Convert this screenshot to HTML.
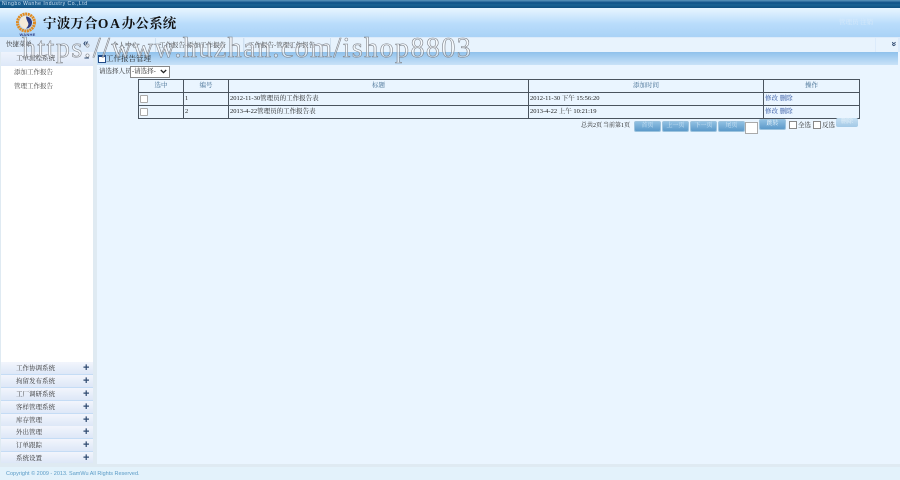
<!DOCTYPE html>
<html>
<head>
<meta charset="utf-8">
<style>
html,body{margin:0;padding:0}
body{width:900px;height:480px;position:relative;overflow:hidden;background:#dfeaf2;font-family:"Liberation Serif","Noto Serif CJK SC",serif;color:#222}
#w{position:absolute;left:0;top:0;width:900px;height:480px;overflow:hidden;filter:blur(.3px)}
.a{position:absolute;white-space:nowrap}
.s{font-size:6.5px;line-height:8px}
.top{left:0;top:0;width:900px;height:8px;background:linear-gradient(#5f97bd,#0d4f86 35%,#1b6293 60%,#0f4f80)}
.hd{left:0;top:8px;width:900px;height:29px;background:linear-gradient(#e8f5ff,#b9dcfb 55%,#a9d2f6)}
.nav{left:0;top:37px;width:900px;height:15px;background:#dcebfb}
.tab{top:38px;height:14px;background:#e6f2fd;border-right:1px solid #cfe0f0}
.side{left:1px;top:52px;width:92px;height:310px;background:#fff}
.sh{left:1px;top:52px;width:92px;height:14px;background:linear-gradient(#eef3fc,#dde8f8)}
.main{left:97px;top:52px;width:803px;height:412px;background:#eaf5ff}
.pt{left:97px;top:52px;width:801px;height:13px;background:linear-gradient(#8fc1ec,#c9e2f8)}
.it{left:1px;width:92px;height:12px;background:linear-gradient(#f2f5fc,#dde7f7);border-bottom:1px solid #c5dcf5}
.it span{position:absolute;left:15px;top:3px;font-size:6.5px;line-height:8px;color:#333}
.it b{position:absolute;left:82px;top:0;font:bold 11px/12px "Liberation Sans",sans-serif;color:#2f4a70}
table{position:absolute;left:138px;top:79px;width:721px;height:39px;border-collapse:collapse;table-layout:fixed;font-size:6.5px}
td{border:1px solid #4a545f;padding:0 0 0 1px;height:12px;line-height:8px;white-space:nowrap;overflow:hidden}
th{border:1px solid #4a545f;font-weight:normal;color:#3e6a90;padding:0;height:12px;line-height:8px}
.cb{display:inline-block;width:6px;height:6px;background:#fff;border:1px solid #aaa;border-radius:1px;vertical-align:middle}
.btn{top:121px;width:25px;height:9px;background:linear-gradient(#8fbfe2,#5c9aca);border:1px solid #9cc3de;border-radius:2px;color:#cfe6f6;font-size:6px;line-height:9px;text-align:center}
.wm{left:22px;top:31px;font-family:"Liberation Serif",serif;font-size:28px;line-height:36px;letter-spacing:1.44px;color:rgba(255,255,255,.55);-webkit-text-stroke:.6px #7f838a}
</style>
</head>
<body>
<div id="w">
<div class="a top"></div>
<div class="a" style="left:2px;top:1px;font:5px/6px 'Liberation Sans',sans-serif;letter-spacing:.55px;color:#cfe3f2">Ningbo Wanhe Industry Co.,Ltd</div>
<div class="a hd"></div>

<svg class="a" style="left:15px;top:12px" width="23" height="22" viewBox="0 0 23 22">
<circle cx="11" cy="10.5" r="8.5" fill="none" stroke="#e08a1e" stroke-width="3" stroke-dasharray="2 .6"/>
<circle cx="11" cy="10.5" r="6.2" fill="#f4ead8"/>
<path d="M11 4.5a6 6 0 0 1 0 12c2-2 3-4 2-6s-2-4-2-6z" fill="#2c3d85"/>
</svg>
<div class="a" style="left:17px;top:32px;width:21px;font:bold 4px/5px 'Liberation Sans',sans-serif;color:#2c3d85;text-align:center;letter-spacing:.2px">WANHE</div>
<div class="a" style="left:43px;top:15px;font-size:13.5px;line-height:18px;font-weight:bold;color:#111;letter-spacing:.2px">宁波万合<span style="letter-spacing:1.8px">OA</span>办公系统</div>
<div class="a s" style="left:839px;top:19px;color:#d6e9fa">管理员 注销</div>

<div class="a nav"></div>
<div class="a s" style="left:6px;top:41px;color:#333">快捷菜单</div>
<div class="a" style="left:83px;top:38px;font:bold 10px/12px 'Liberation Sans',sans-serif;color:#2f4a70">«</div>
<div class="a tab" style="left:98px;width:57px"></div>
<div class="a tab" style="left:156px;width:87px"></div>
<div class="a tab" style="left:245px;width:85px"></div>
<div class="a tab" style="left:331px;width:544px;background:#e8f3fd;border:0"></div>
<div class="a tab" style="left:876px;width:22px;background:#e8f3fd;border:0"></div>
<div class="a s" style="left:112px;top:42px;color:#444">个人中心</div>
<div class="a s" style="left:159px;top:42px;color:#444">工作报告-添加工作报告</div>
<div class="a s" style="left:248px;top:42px;color:#444">工作报告-管理工作报告</div>
<div class="a s" style="left:325px;top:42px;color:#888">×</div>
<div class="a" style="left:892px;top:38px;font:bold 9px/12px 'Liberation Sans',sans-serif;transform:rotate(90deg);color:#2f4a70">»</div>

<div class="a side"></div>
<div class="a sh"></div>
<div class="a s" style="left:16px;top:55px;color:#333">工单流程系统</div>
<div class="a" style="left:84px;top:52px;font:bold 9px/12px 'Liberation Sans',sans-serif;color:#2f4a70">−</div>
<div class="a s" style="left:14px;top:69px;color:#444">添加工作报告</div>
<div class="a s" style="left:14px;top:83px;color:#444">管理工作报告</div>

<div class="a it" style="top:362px"><span>工作协调系统</span><b>+</b></div>
<div class="a it" style="top:375px"><span>拘留发布系统</span><b>+</b></div>
<div class="a it" style="top:388px"><span>工厂调研系统</span><b>+</b></div>
<div class="a it" style="top:401px"><span>客样管理系统</span><b>+</b></div>
<div class="a it" style="top:414px"><span>库存管理</span><b>+</b></div>
<div class="a it" style="top:426px"><span>外出管理</span><b>+</b></div>
<div class="a it" style="top:439px"><span>订单跟踪</span><b>+</b></div>
<div class="a it" style="top:452px;height:11px;border-bottom:0"><span>系统设置</span><b>+</b></div>

<div class="a main"></div>
<div class="a pt"></div>
<div class="a" style="left:98px;top:55px;width:6px;height:5px;background:#fff;border:1px solid #234c88;border-top-width:2px"></div>
<div class="a" style="left:106px;top:54px;font-size:7.5px;line-height:9px;color:#222">工作报告管理</div>
<div class="a s" style="left:99px;top:68px;color:#222">请选择人员</div>
<div class="a" style="left:130px;top:66px;width:37px;height:10px;border:1px solid #888;background:#fff;font-size:6.5px;line-height:10px;color:#222;padding-left:1px">-请选择-</div>
<svg class="a" style="left:160px;top:69px" width="7" height="5" viewBox="0 0 7 5"><path d="M.8 1l2.7 2.6L6.2 1" fill="none" stroke="#222" stroke-width="1.3"/></svg>

<table>
<colgroup><col style="width:45px"><col style="width:45px"><col style="width:300px"><col style="width:235px"><col style="width:96px"></colgroup>
<tr><th>选中</th><th>编号</th><th>标题</th><th>添加时间</th><th>操作</th></tr>
<tr><td><span class="cb"></span></td><td>1</td><td>2012-11-30管理员的工作报告表</td><td>2012-11-30 下午 15:56:20</td><td style="color:#2a4f9e">修改 删除</td></tr>
<tr><td><span class="cb"></span></td><td>2</td><td>2013-4-22管理员的工作报告表</td><td>2013-4-22 上午 10:21:19</td><td style="color:#2a4f9e">修改 删除</td></tr>
</table>

<div class="a" style="left:581px;top:122px;font-size:6px;line-height:8px;color:#222">总共2页</div>
<div class="a" style="left:603px;top:122px;font-size:6px;line-height:8px;color:#222">当前第1页</div>
<div class="a btn" style="left:634px">首页</div>
<div class="a btn" style="left:662px">上一页</div>
<div class="a btn" style="left:690px">下一页</div>
<div class="a btn" style="left:718px">尾页</div>
<div class="a" style="left:745px;top:122px;width:11px;height:10px;background:#fff;border:1px solid #aaa"></div>
<div class="a btn" style="left:759px;top:119px;color:#e8f4fb">跳转</div>
<div class="a" style="left:789px;top:121px;width:6px;height:6px;background:#fff;border:1px solid #888"></div>
<div class="a s" style="left:798px;top:122px;color:#222">全选</div>
<div class="a" style="left:813px;top:121px;width:6px;height:6px;background:#fff;border:1px solid #888"></div>
<div class="a s" style="left:822px;top:122px;color:#222">反选</div>
<div class="a btn" style="left:836px;top:118px;width:22px;height:9px;background:linear-gradient(#c5dff2,#a3c9e6);border:0;color:#e4f1fa">删除</div>

<div class="a" style="left:0;top:467px;width:900px;height:13px;background:#e3f2fb"></div>
<div class="a" style="left:6px;top:471px;font:5.5px/7px 'Liberation Sans',sans-serif;color:#5a9bc6">Copyright © 2009 - 2013. SamWu All Rights Reserved.</div>

<div class="a wm">https://www.huzhan.com/ishop8803</div>
</div>
</body>
</html>
